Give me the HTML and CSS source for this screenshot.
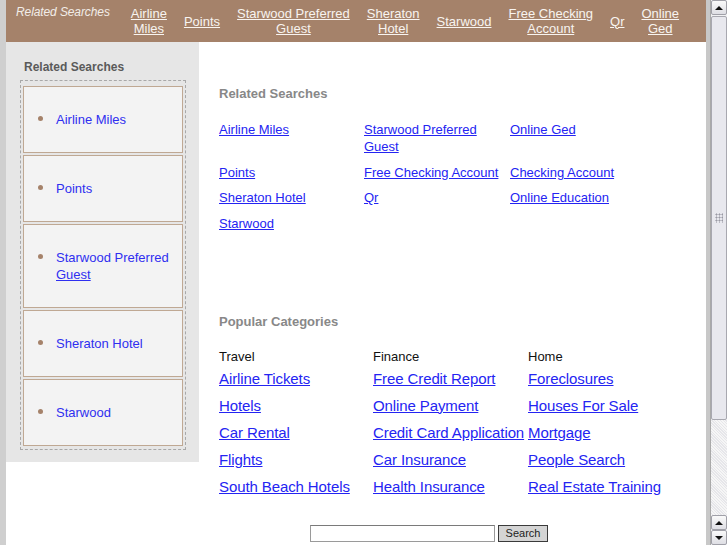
FILE: index.html
```html
<!DOCTYPE html>
<html lang="en">
<head>
    <meta charset="UTF-8">
    <title>Related Searches</title>
    <link rel="stylesheet" href="styles.css">
</head>
<body>
    <div class="page">
        <!-- Top bar -->
        <div class="topbar">
            <span class="topbar-label">Related Searches</span>
            <a href="#" class="top-link">Airline<br>Miles</a>
            <a href="#" class="top-link">Points</a>
            <a href="#" class="top-link">Starwood Preferred<br>Guest</a>
            <a href="#" class="top-link">Sheraton<br>Hotel</a>
            <a href="#" class="top-link">Starwood</a>
            <a href="#" class="top-link">Free Checking<br>Account</a>
            <a href="#" class="top-link">Qr</a>
            <a href="#" class="top-link">Online<br>Ged</a>
        </div>

        <div class="columns">
            <!-- Sidebar -->
            <div class="sidebar">
                <div class="side-title">Related Searches</div>
                <ul class="side-list">
                    <li><a href="#">Airline Miles</a></li>
                    <li><a href="#">Points</a></li>
                    <li><a href="#">Starwood Preferred <span class="hover">Guest</span></a></li>
                    <li><a href="#">Sheraton Hotel</a></li>
                    <li><a href="#">Starwood</a></li>
                </ul>
            </div>

            <!-- Main content -->
            <div class="main">
                <h2 class="section-title">Related Searches</h2>
                <div class="related">
                    <a href="#">Airline Miles</a>
                    <a href="#">Starwood Preferred Guest</a>
                    <a href="#">Online Ged</a>
                    <a href="#">Points</a>
                    <a href="#">Free Checking Account</a>
                    <a href="#">Checking Account</a>
                    <a href="#">Sheraton Hotel</a>
                    <a href="#">Qr</a>
                    <a href="#">Online Education</a>
                    <a href="#">Starwood</a>
                </div>

                <h2 class="section-title popular-title">Popular Categories</h2>
                <div class="categories">
                    <div class="cat">
                        <div class="cat-name">Travel</div>
                        <a href="#">Airline Tickets</a>
                        <a href="#">Hotels</a>
                        <a href="#">Car Rental</a>
                        <a href="#">Flights</a>
                        <a href="#">South Beach Hotels</a>
                    </div>
                    <div class="cat">
                        <div class="cat-name">Finance</div>
                        <a href="#">Free Credit Report</a>
                        <a href="#">Online Payment</a>
                        <a href="#">Credit Card Application</a>
                        <a href="#">Car Insurance</a>
                        <a href="#">Health Insurance</a>
                    </div>
                    <div class="cat">
                        <div class="cat-name">Home</div>
                        <a href="#">Foreclosures</a>
                        <a href="#">Houses For Sale</a>
                        <a href="#">Mortgage</a>
                        <a href="#">People Search</a>
                        <a href="#">Real Estate Training</a>
                    </div>
                </div>

                <form class="search" onsubmit="return false">
                    <input type="text" class="search-input">
                    <button type="submit" class="search-button">Search</button>
                </form>
            </div>
        </div>
    </div>

    <!-- Frame edge and scrollbar -->
    <div class="edge"></div>
    <div class="scrollbar">
        <div class="sb-btn up"></div>
        <div class="sb-thumb"><div class="grip"></div></div>
        <div class="sb-track"></div>
        <div class="sb-btn up"></div>
        <div class="sb-btn down"></div>
    </div>
</body>
</html>
```

FILE: styles.css
```css
body {
    margin: 0;
    height: 545px;
    overflow: hidden;
    display: flex;
    background-color: #cfcfcf;
    font-family: "Liberation Sans", Arial, sans-serif;
}

.page {
    width: 700px;
    margin-left: 6px;
    background: white;
    display: flex;
    flex-direction: column;
}

/* Top bar */
.topbar {
    height: 42px;
    box-sizing: border-box;
    padding: 5px 10px;
    background-color: #a5826a;
    display: flex;
    align-items: center;
    gap: 17px;
}

.topbar-label {
    align-self: flex-start;
    font-size: 12px;
    line-height: 15px;
    font-style: italic;
    color: #f2ede8;
    margin-right: 4px;
    letter-spacing: -0.1px;
}

.top-link {
    font-size: 13px;
    line-height: 15px;
    color: #f8f4f0;
    text-align: center;
}

.columns {
    display: flex;
    align-items: flex-start;
    flex: 1;
}

/* Sidebar */
.sidebar {
    width: 193px;
    box-sizing: border-box;
    padding: 18px 13px 12px 14px;
    background-color: #e6e6e6;
}

.side-title {
    font-size: 12px;
    line-height: 15px;
    font-weight: bold;
    color: #5a5a5a;
    margin: 0 0 5px 4px;
}

.side-list {
    list-style: none;
    margin: 0;
    padding: 5px 2px 3px;
    border: 1px dashed #a8a8a8;
    display: flex;
    flex-direction: column;
    gap: 2px;
}

.side-list li {
    padding: 24px 8px 24px 32px;
    border: 1px solid #bfa893;
    background-color: #f3f3f3;
    font-size: 13px;
    line-height: 17px;
}

.side-list li::before {
    content: "";
    display: inline-block;
    width: 5px;
    height: 5px;
    border-radius: 50%;
    background-color: #a5826a;
    margin-left: -18px;
    margin-right: 13px;
    vertical-align: 3px;
}

.side-list a {
    color: #2f2ff0;
    text-decoration: none;
}

.side-list .hover {
    text-decoration: underline;
}

/* Main */
.main {
    flex: 1;
    padding: 43px 0 0 20px;
}

.section-title {
    margin: 0;
    font-size: 13px;
    line-height: 17px;
    color: #888;
}

.related {
    margin-top: 19px;
    display: grid;
    grid-template-columns: 145px 146px 145px;
    row-gap: 8.5px;
    font-size: 13px;
    line-height: 17px;
}

.related a,
.cat a {
    color: #2424f2;
}

.popular-title {
    margin-top: 81px;
}

.categories {
    margin-top: 18px;
    display: grid;
    grid-template-columns: 154px 155px 155px;
}

.cat {
    display: flex;
    flex-direction: column;
    align-items: flex-start;
    gap: 9px;
}

.cat-name {
    font-size: 13px;
    line-height: 17px;
    color: #111;
    margin-bottom: -4px;
}

.cat a {
    font-size: 15px;
    line-height: 18px;
    white-space: nowrap;
    letter-spacing: -0.1px;
}

.search {
    margin: 29px 0 0 91px;
    display: flex;
    gap: 3px;
}

.search-input {
    width: 185px;
    height: 17px;
    box-sizing: border-box;
    margin: 0;
    border: 1px solid #9a9a9a;
    border-top-color: #7a7a7a;
    padding: 0 2px;
}

.search-button {
    width: 50px;
    height: 17px;
    box-sizing: border-box;
    margin: 0;
    padding: 0;
    border: 1px solid #3a3a3a;
    background-color: #d4d4d4;
    font-family: "Liberation Sans", Arial, sans-serif;
    font-size: 11px;
    color: #222;
}

/* Frame scrollbar */
.edge {
    width: 5px;
    background-color: #c8c8c8;
    border-right: 1px solid #a9a9a9;
    box-sizing: border-box;
}

.scrollbar {
    width: 16px;
    display: flex;
    flex-direction: column;
    background-color: #f2f2f4;
}

.sb-btn {
    height: 15px;
    box-sizing: border-box;
    border: 1px solid #a0a0a8;
    border-radius: 2px;
    background: linear-gradient(#fafafa, #dedee4);
    display: flex;
    align-items: center;
    justify-content: center;
}

.sb-btn::after {
    content: "";
    border-left: 4px solid transparent;
    border-right: 4px solid transparent;
}

.sb-btn.up::after {
    border-bottom: 4px solid #111;
}

.sb-btn.down::after {
    border-top: 4px solid #111;
}

.sb-thumb {
    height: 404px;
    box-sizing: border-box;
    margin-top: 1px;
    border: 1px solid #a8a8b0;
    border-radius: 2px;
    background-color: #e8e8ee;
    display: flex;
    align-items: center;
    justify-content: center;
}

.grip {
    width: 8px;
    height: 10px;
    background-image: radial-gradient(#9a9aa4 45%, transparent 50%);
    background-size: 3px 3px;
}

.sb-track {
    flex: 1;
    background-image: repeating-linear-gradient(45deg, #f6f6f6 0 1px, #e6e6ea 1px 2px);
}
```
